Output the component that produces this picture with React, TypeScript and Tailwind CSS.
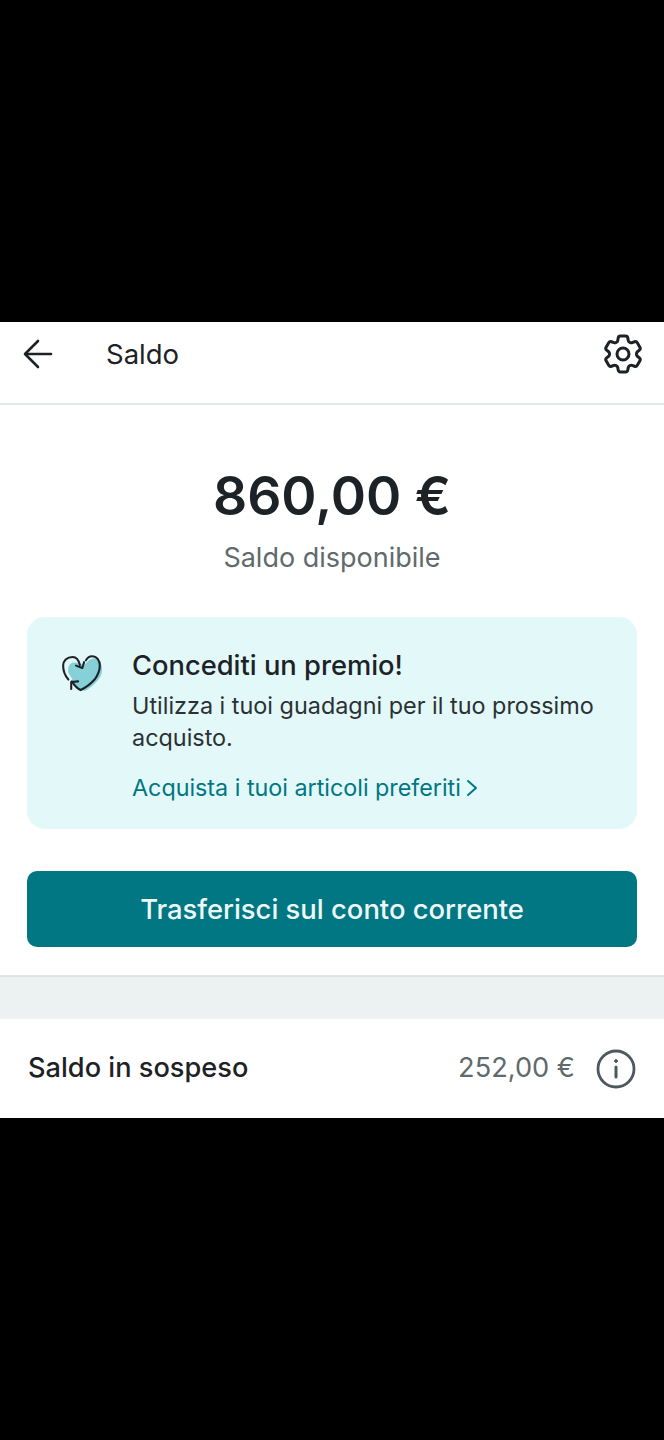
import { HiOutlineCog6Tooth } from "react-icons/hi2"

function HeartIcon() {
  return (
    <svg width="44" height="40" viewBox="0 0 42 38" fill="none" className="shrink-0">
      {/* teal fill */}
      <path d="M8 18C7 13 9 8 13 8c4 0 7 1 10 3 3-4 6-7 10-7 5 1 8 7 7 13-1 7-9 14-16 18-3 0-7-2-10-6-2-4-3-7-6-11z" fill="#86d0d8" />
      {/* outline */}
      <path d="M19 10.500C18 6 15.500 2.700 12 2.700 6.500 2.700 3 6.500 3 11c0 5 2 10 5 13.300" stroke="#1d2226" strokeWidth="2" strokeLinecap="round" />
      <path d="M24.700 6C26 3.500 28 2 30.500 2 35 2 38 6 38 11c0 5-2 9.500-5 13.300-3.500 4-8 7.500-13.300 10-3-1.500-6-4.500-8.400-8.300" stroke="#1d2226" strokeWidth="2" strokeLinecap="round" />
      <path d="M15.300 11l6 2.300 1.700-5.600" stroke="#1d2226" strokeWidth="2" strokeLinecap="round" strokeLinejoin="round" />
      <path d="M10.700 33.300v-6.600l6.600-.7" stroke="#1d2226" strokeWidth="2" strokeLinecap="round" strokeLinejoin="round" />
    </svg>
  )
}

function BackArrow() {
  return (
    <svg width="30" height="30" viewBox="0 0 30 30" fill="none" stroke="#1d2226" strokeWidth="2.600" strokeLinecap="round" strokeLinejoin="round">
      <path d="M28 15H3" />
      <path d="M15 2 2 15l13 13" />
    </svg>
  )
}

function InfoIcon() {
  return (
    <svg width="40" height="40" viewBox="0 0 40 40" fill="none" stroke="#4f585b" strokeWidth="2.800" strokeLinecap="round" className="ml-[21px] shrink-0">
      <circle cx="20" cy="20" r="18" />
      <path d="M20 18v10" strokeWidth="3" />
      <circle cx="20" cy="12" r="1.400" fill="#4f585b" strokeWidth="1" />
    </svg>
  )
}

export default function App() {
  return (
    <div className="min-h-[1440px] w-[664px] bg-black font-['Inter',sans-serif]">
      <div className="h-[322px]" />

      <div className="bg-white">
        {/* Header */}
        <div className="flex h-[83px] items-start border-b-2 border-[#e6e9e9] pl-[23px] pr-[17px] pt-[17px]">
          <BackArrow />
          <span className="ml-[53px] -mt-[1px] text-[27.500px] leading-[33px] text-[#1d2226]">Saldo</span>
          <HiOutlineCog6Tooth className="ml-auto h-[48px] w-[48px] -translate-y-[9px] text-[#1d2226]" />
        </div>

        {/* Balance */}
        <div className="flex flex-col items-center pt-[58px]">
          <div className="text-[53.500px] font-semibold leading-[66px] text-[#1d2226]">860,00 €</div>
          <div className="mt-[12px] text-[27px] leading-[33px] text-[#5f6a6d]">Saldo disponibile</div>
        </div>

        {/* Promo */}
        <div className="mx-[27px] mt-[43px] flex h-[212px] rounded-[18px] bg-[#e3f8f8] pl-[33px] pr-[20px] pt-[32px]">
          <div className="mt-[5px] w-[72px] shrink-0">
            <HeartIcon />
          </div>
          <div>
            <div className="text-[27.300px] font-medium leading-[34px] text-[#1d2226]">Concediti un premio!</div>
            <p className="mt-[7px] text-[23.400px] leading-[32px] text-[#2b3135]">
              Utilizza i tuoi guadagni per il tuo prossimo acquisto.
            </p>
            <div className="mt-[18px] flex items-center text-[23.300px] leading-[32px] text-[#007782]">
              Acquista i tuoi articoli preferiti
              <svg width="12" height="18" viewBox="0 0 12 18" fill="none" stroke="#007782" strokeWidth="2" strokeLinecap="round" strokeLinejoin="round" className="ml-[5px]">
                <path d="M2 2l8 7-8 7" />
              </svg>
            </div>
          </div>
        </div>

        {/* Button */}
        <div className="px-[27px] pt-[42px]">
          <button className="flex h-[76px] w-full items-center justify-center rounded-[10px] bg-[#007782] pt-[2px] text-[27.400px] font-medium text-[#eef8f8]">
            Trasferisci sul conto corrente
          </button>
        </div>

        <div className="mt-[28px] h-[44px] border-t-2 border-[#dfe5e5] bg-[#ecf1f1]" />

        {/* Pending */}
        <div className="flex h-[99px] items-center pl-[28px] pr-[28px]">
          <span className="text-[27.200px] font-medium text-[#1d2226]">Saldo in sospeso</span>
          <span className="ml-auto text-[27.200px] text-[#5f6a6d]">252,00 €</span>
          <InfoIcon />
        </div>
      </div>
    </div>
  )
}
